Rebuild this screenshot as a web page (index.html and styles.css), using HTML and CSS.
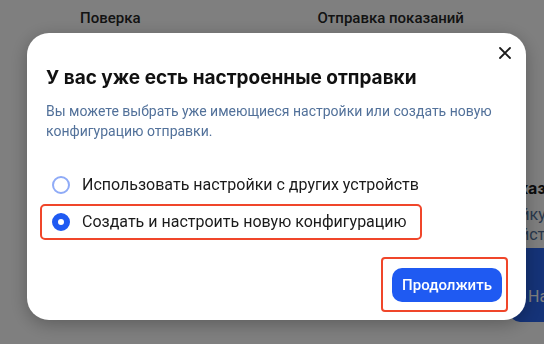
FILE: index.html
```html
<!DOCTYPE html>
<html lang="ru">
<head>
<meta charset="utf-8">
<title>Настройки отправки</title>
<link rel="stylesheet" href="styles.css">
</head>
<body>
<div class="page">
  <nav class="tabs">
    <span class="tab tab-first">Поверка</span>
    <span class="tab tab-second">Отправка показаний</span>
  </nav>
  <section class="content">
    <div class="side-card">
      <h3 class="side-title">Показания</h3>
      <p class="side-text">Настройку передачи<br>с устройств</p>
      <button class="side-btn">Начать</button>
    </div>
  </section>
</div>

<div class="overlay">
  <div class="modal">
    <button class="close" aria-label="Закрыть">
      <svg width="12" height="12" viewBox="0 0 12 12"><path d="M1 1L11 11M11 1L1 11" stroke="#1c1c1c" stroke-width="1.8" stroke-linecap="round"/></svg>
    </button>
    <h2 class="title">У вас уже есть настроенные отправки</h2>
    <p class="subtitle">Вы можете выбрать уже имеющиеся настройки или создать новую конфигурацию отправки.</p>
    <div class="options">
      <label class="option"><span class="radio"></span><span>Использовать настройки с других устройств</span></label>
      <label class="option option-selected"><span class="radio radio-on"></span><span>Создать и настроить новую конфигурацию</span></label>
    </div>
    <div class="actions">
      <div class="highlight">
        <button class="primary">Продолжить</button>
      </div>
    </div>
  </div>
</div>
</body>
</html>
```
FILE: styles.css
```css
* { box-sizing: border-box; }
html, body { margin: 0; padding: 0; }
body {
  width: 544px;
  height: 344px;
  overflow: hidden;
  background: #fff;
  font-family: Roboto, "Liberation Sans", sans-serif;
}
.page { height: 344px; }
.tabs {
  display: flex;
  align-items: center;
  height: 36px;
  padding-left: 80px;
  font: 500 15px/20px Roboto, sans-serif;
  color: #262626;
}
.tab-second { margin-left: 177px; }
.content {
  padding: 141px 0 0 497px;
}
.side-card { width: 200px; }
.side-title {
  margin: 0;
  font: 700 16px/22px Inter, sans-serif;
  color: #1a1a1a;
  white-space: nowrap;
}
.side-text {
  margin: 6px 0 0 -31px;
  font: 16px/20px Roboto, sans-serif;
  color: #52719a;
  white-space: nowrap;
}
.side-btn {
  display: flex;
  align-items: flex-end;
  margin: 3px 0 0 13px;
  width: 140px;
  height: 74px;
  padding: 0 18px 15px;
  border: 0;
  border-radius: 10px;
  background: #2a66f0;
  color: #fff;
  font: 16px/20px Roboto, sans-serif;
}
.overlay {
  position: fixed;
  inset: 0;
  background: rgba(0, 0, 0, 0.5);
  padding: 33px 18px 24px 27px;
}
.modal {
  position: relative;
  width: 499px;
  height: 287px;
  background: #fff;
  border-radius: 22px;
  padding: 33px 18px 0 19px;
  box-shadow: 0 4px 18px rgba(0, 0, 0, 0.28);
}
.close {
  position: absolute;
  top: 14px;
  right: 15px;
  width: 12px;
  height: 12px;
  padding: 0;
  border: 0;
  background: none;
  display: block;
}
.close svg { display: block; }
.title {
  margin: 0;
  font: 700 19px/24px Inter, sans-serif;
  color: #111;
}
.subtitle {
  margin: 11px 0 0;
  font: 14px/20px Roboto, sans-serif;
  color: #52719a;
}
.options {
  margin: 26px 0 0 -6px;
  display: flex;
  flex-direction: column;
  align-items: flex-start;
  gap: 1px;
}
.option {
  display: inline-flex;
  align-items: center;
  gap: 12px;
  height: 36px;
  padding: 0 13px 0 10px;
  border: 2px solid transparent;
  border-radius: 5px;
  font: 16px/20px Roboto, sans-serif;
  color: #1a1a1a;
}
.option-selected { border-color: #f0462a; }
.radio {
  width: 18px;
  height: 18px;
  border-radius: 50%;
  border: 2px solid #8fabf7;
  background: #fff;
  flex: none;
}
.radio-on { border: 6px solid #1f5af2; }
.actions {
  display: flex;
  justify-content: flex-end;
  margin-top: 17px;
}
.highlight {
  border: 2px solid #f0462a;
  border-radius: 4px;
  padding: 9px 4px 8px 9px;
}
.primary {
  display: block;
  width: 110px;
  height: 34px;
  border: 0;
  border-radius: 10px;
  background: #1f5af2;
  color: #fff;
  font: 500 15px Roboto, sans-serif;
}
```
